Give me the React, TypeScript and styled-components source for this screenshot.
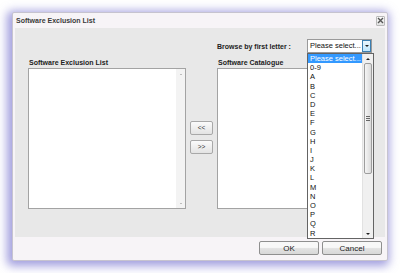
import styled, { createGlobalStyle } from "styled-components";

// only the rows that fit in the open list are rendered
const LETTERS = ["0-9", ..."ABCDEFGHIJKLMNOPQR".split("")];

const Global = createGlobalStyle`
  html, body {
    margin: 0;
    background: #ffffff;
    font-family: "Liberation Sans", Arial, sans-serif;
  }
`;

export default function App() {
  return (
    <>
      <Global />
      <Page>
        <Dialog>
          <TitleBar>
            <Title>Software Exclusion List</Title>
            <CloseButton aria-label="Close">
              <svg width="7" height="7" viewBox="0 0 7 7">
                <path d="M1 1 L6 6 M6 1 L1 6" stroke="#555" strokeWidth="1.4" />
              </svg>
            </CloseButton>
          </TitleBar>

          <Body>
            <BrowseRow>
              <BrowseLabel>Browse by first letter :</BrowseLabel>
              <SelectWrap>
                <Select>
                  <SelectText>Please select...</SelectText>
                  <SelectArrow>
                    <Triangle $down />
                  </SelectArrow>
                </Select>
                <Dropdown>
                  <Options>
                    <Option $selected>Please select...</Option>
                    {LETTERS.map((l) => (
                      <Option key={l}>{l}</Option>
                    ))}
                  </Options>
                  <ScrollBar>
                    <ScrollArrow>
                      <Triangle />
                    </ScrollArrow>
                    <Thumb>
                      <Grip />
                    </Thumb>
                    <Track />
                    <ScrollArrow>
                      <Triangle $down />
                    </ScrollArrow>
                  </ScrollBar>
                </Dropdown>
              </SelectWrap>
            </BrowseRow>

            <ListLabel $col={1}>Software Exclusion List</ListLabel>
            <ListBox $col={1}>
              <ListArea />
              <ListScroll>
                <Triangle $small />
                <Triangle $small $down />
              </ListScroll>
            </ListBox>

            <MoveButtons>
              <SmallButton>&lt;&lt;</SmallButton>
              <SmallButton>&gt;&gt;</SmallButton>
            </MoveButtons>

            <ListLabel $col={3}>Software Catalogue</ListLabel>
            <ListBox $col={3}>
              <ListArea />
            </ListBox>
          </Body>

          <Footer>
            <FooterButton>OK</FooterButton>
            <FooterButton>Cancel</FooterButton>
          </Footer>
        </Dialog>
      </Page>
    </>
  );
}

const Page = styled.div`
  padding: 12px;
`;

const Dialog = styled.div`
  box-sizing: border-box;
  width: 376px;
  height: 249px;
  display: flex;
  flex-direction: column;
  background: #f7f4f7;
  border: 1px solid #c6c3cf;
  border-radius: 2px;
  box-shadow: -2px 2px 10px 3px rgba(98, 94, 200, 0.6);
`;

const TitleBar = styled.div`
  height: 15px;
  display: flex;
  align-items: center;
  justify-content: space-between;
  padding: 0 2px 0 3px;
`;

const Title = styled.span`
  font-size: 7px;
  font-weight: bold;
  color: #3a3a3a;
`;

const CloseButton = styled.div`
  box-sizing: border-box;
  width: 9px;
  height: 10px;
  display: flex;
  align-items: center;
  justify-content: center;
  border: 1px solid #b9b9b9;
  border-radius: 1px;
  background: linear-gradient(#fafafa, #e2e2e2);
`;

const Body = styled.div`
  flex: 1;
  margin: 0 2px;
  background: #e8e8e8;
  padding: 11px 13px 0;
  display: grid;
  grid-template-columns: 158px 31px 155px;
  grid-template-rows: 14px 15px 141px;
`;

const BrowseRow = styled.div`
  grid-column: 3;
  grid-row: 1;
  display: flex;
  align-items: center;
  justify-content: space-between;
`;

const BrowseLabel = styled.span`
  font-size: 7px;
  font-weight: bold;
  color: #222;
`;

const SelectWrap = styled.div`
  position: relative;
  width: 65px;
  height: 14px;
`;

const Select = styled.div`
  box-sizing: border-box;
  height: 100%;
  display: flex;
  background: #fff;
  border: 1px solid #9a9a9a;
`;

const SelectText = styled.span`
  flex: 1;
  font-size: 7.5px;
  line-height: 12px;
  padding-left: 2px;
  color: #111;
  white-space: nowrap;
  overflow: hidden;
`;

const SelectArrow = styled.div`
  box-sizing: border-box;
  width: 9px;
  display: flex;
  align-items: center;
  justify-content: center;
  border: 1px solid #3c7fb1;
  background: linear-gradient(#eaf6fd, #bee6fd);
`;

const Triangle = styled.span<{ $down?: boolean; $small?: boolean }>`
  width: 0;
  height: 0;
  border-left: ${(p) => (p.$small ? 1.5 : 2)}px solid transparent;
  border-right: ${(p) => (p.$small ? 1.5 : 2)}px solid transparent;
  ${(p) => (p.$down ? "border-top" : "border-bottom")}: ${(p) =>
      p.$small ? 1.5 : 2}px solid ${(p) => (p.$small ? "#888" : "#222")};
`;

const Dropdown = styled.div`
  position: absolute;
  top: 100%;
  left: 0;
  z-index: 2;
  box-sizing: border-box;
  width: 67px;
  height: 186px;
  display: flex;
  background: #fff;
  border: 1px solid #646464;
  overflow: hidden;
`;

const Options = styled.div`
  flex: 1;
`;

const Option = styled.div<{ $selected?: boolean }>`
  height: 9.2px;
  line-height: 9.2px;
  padding-left: 2px;
  font-size: 7.5px;
  white-space: nowrap;
  color: ${(p) => (p.$selected ? "#fff" : "#111")};
  background: ${(p) => (p.$selected ? "#3399ff" : "transparent")};
`;

const ScrollBar = styled.div`
  width: 10px;
  display: flex;
  flex-direction: column;
  background: #f0f0f0;
  border-left: 1px solid #e2e2e2;
`;

const ScrollArrow = styled.div`
  height: 9px;
  display: flex;
  align-items: center;
  justify-content: center;
`;

const Thumb = styled.div`
  box-sizing: border-box;
  height: 111px;
  margin: 0 1px;
  display: flex;
  align-items: center;
  justify-content: center;
  border: 1px solid #9d9d9d;
  border-radius: 2px;
  background: linear-gradient(to right, #f5f5f5, #dadada);
`;

const Grip = styled.span`
  width: 4px;
  height: 5px;
  background: repeating-linear-gradient(#666 0 1px, transparent 1px 2px);
`;

const Track = styled.div`
  flex: 1;
`;

const ListLabel = styled.div<{ $col: number }>`
  grid-column: ${(p) => p.$col};
  grid-row: 2;
  align-self: end;
  padding: 0 0 2px 1px;
  font-size: 7px;
  font-weight: bold;
  color: #222;
`;

const ListBox = styled.div<{ $col: number }>`
  grid-column: ${(p) => p.$col};
  grid-row: 3;
  display: flex;
  background: #fff;
  border: 1px solid #a3a3a3;
`;

const ListArea = styled.div`
  flex: 1;
`;

const ListScroll = styled.div`
  width: 9px;
  display: flex;
  flex-direction: column;
  align-items: center;
  justify-content: space-between;
  padding: 5px 0 4px;
  background: #f3f3f3;
`;

const MoveButtons = styled.div`
  grid-column: 2;
  grid-row: 3;
  display: flex;
  flex-direction: column;
  align-items: center;
  justify-content: center;
  gap: 5px;
  padding-bottom: 3px;
`;

const SmallButton = styled.div`
  box-sizing: border-box;
  width: 23px;
  height: 14px;
  display: flex;
  align-items: center;
  justify-content: center;
  font-size: 6.5px;
  color: #333;
  border: 1px solid #a8a8a8;
  border-radius: 2px;
  background: linear-gradient(#fbfbfb, #e3e3e3);
`;

const Footer = styled.div`
  height: 23px;
  display: flex;
  justify-content: flex-end;
  gap: 3px;
  padding: 4px 5px 0 0;
  box-sizing: border-box;
`;

const FooterButton = styled.div`
  box-sizing: border-box;
  width: 60px;
  height: 14px;
  display: flex;
  align-items: center;
  justify-content: center;
  font-size: 8px;
  color: #222;
  border: 1px solid #8f8f8f;
  border-radius: 2px;
  background: linear-gradient(#f8f8f8 45%, #e2e2e2 55%, #d8d8d8);
`;
